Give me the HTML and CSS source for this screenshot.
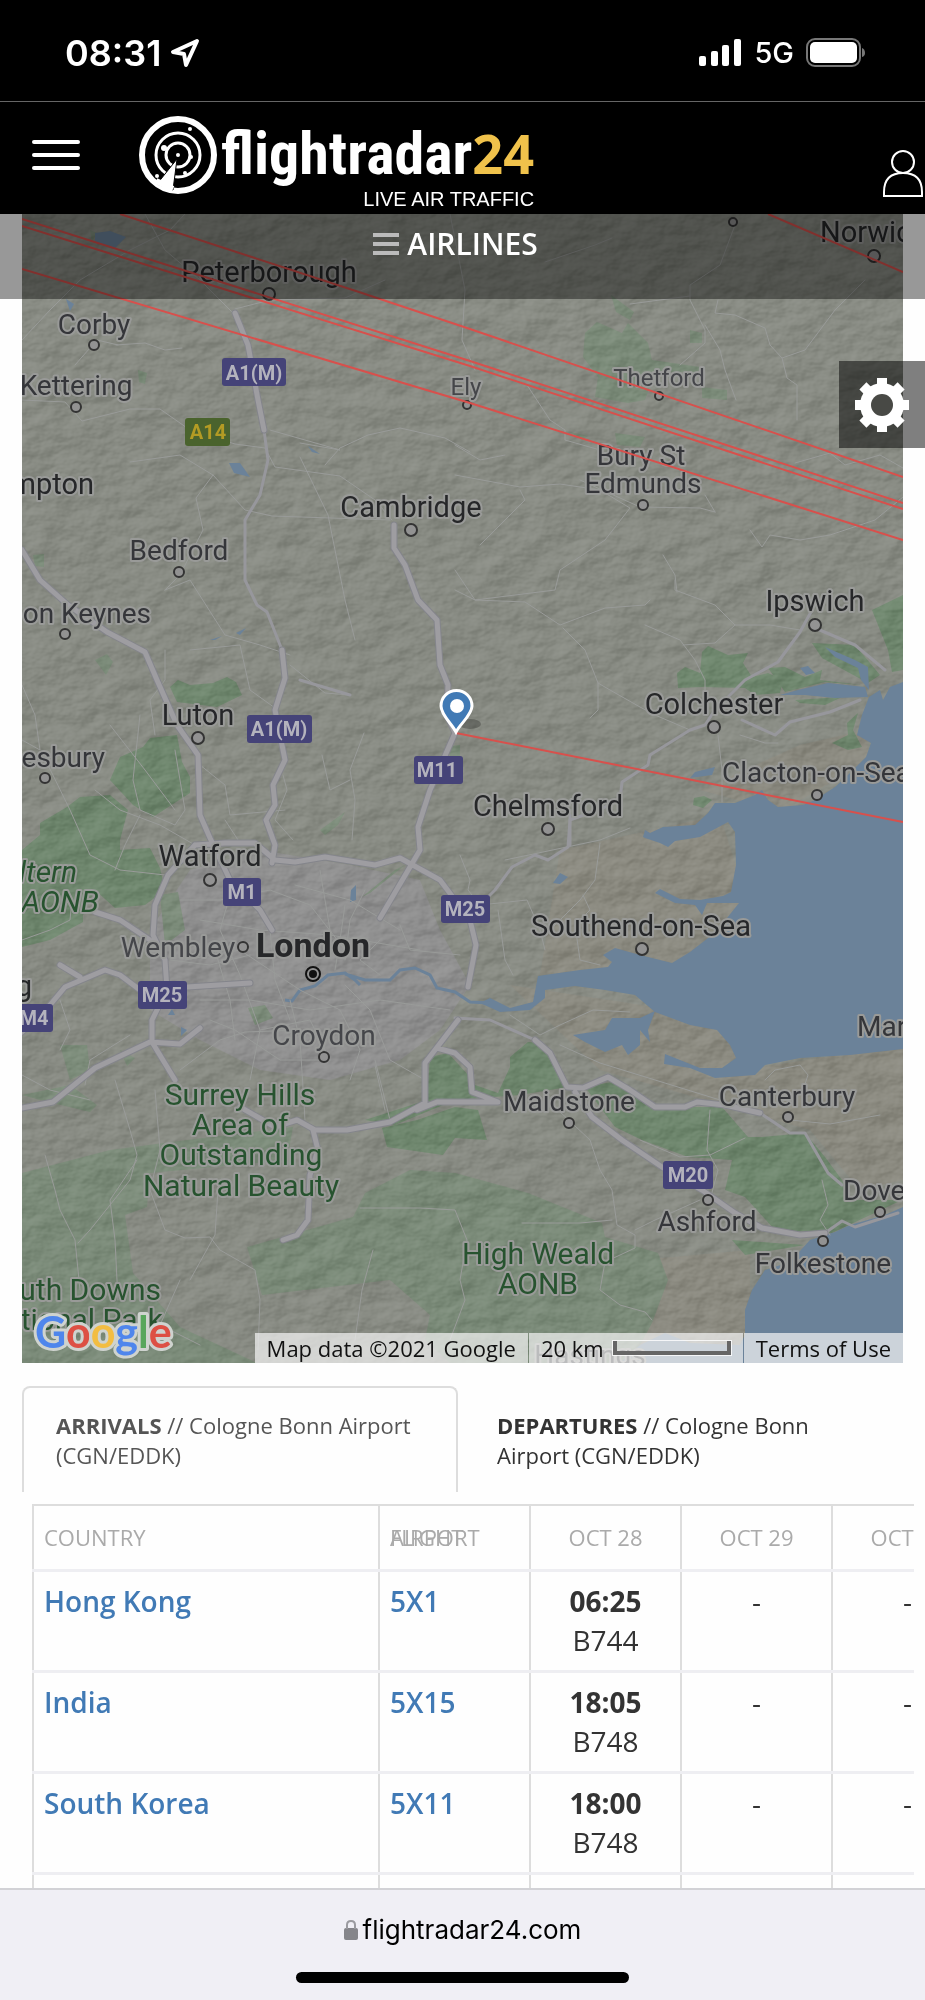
FILE: index.html
```html
<!DOCTYPE html>
<html lang="en">

<head>
    <meta charset="UTF-8">
    <meta name="viewport" content="width=device-width, initial-scale=1.0">
    <title>Flightradar24 - Routes</title>
    <link rel="stylesheet" href="styles.css">
</head>

<body>
    <div class="status-bar">
        <div class="status-time">
            <span>08:31</span>
            <svg width="30" height="30" viewBox="0 0 30 30">
                <path d="M27 3 L3 14 L14 16 L16 27 Z" fill="none" stroke="#fff" stroke-width="4" stroke-linejoin="round" />
            </svg>
        </div>
        <div class="status-icons">
            <svg width="43" height="28" viewBox="0 0 43 28" fill="#fff">
                <rect x="0" y="17" width="7" height="10" rx="2" />
                <rect x="12" y="12" width="7" height="15" rx="2" />
                <rect x="23" y="6" width="7" height="21" rx="2" />
                <rect x="35" y="0" width="7" height="27" rx="2" />
            </svg>
            <span class="network">5G</span>
            <svg width="60" height="30" viewBox="0 0 60 30">
                <rect x="1" y="1" width="53" height="27" rx="8" fill="none" stroke="#777" stroke-width="2" />
                <rect x="4" y="4" width="47" height="21" rx="5" fill="#fff" />
                <path d="M56 10 Q59 11 59 15 Q59 18 56 19 Z" fill="#777" />
            </svg>
        </div>
    </div>

    <header class="header">
        <button class="menu-button" aria-label="Menu"><span></span><span></span><span></span></button>
        <a class="logo" href="#">
            <svg width="78" height="78" viewBox="0 0 78 78" fill="none" stroke="#fff">
                <circle cx="39" cy="39" r="36" stroke-width="6" />
                <circle cx="39" cy="39" r="22" stroke-width="3" />
                <circle cx="39" cy="39" r="12" stroke-width="3" />
                <path d="M38 43 L18 68 L34 74 Z" fill="#fff" stroke="#000" stroke-width="1" />
                <path d="M17 65 L34 73" stroke-width="6" />
                <g fill="#fff" stroke="none">
                    <circle cx="39" cy="39" r="2" />
                    <circle cx="51" cy="13" r="2" />
                    <circle cx="25" cy="32" r="3" />
                    <circle cx="52" cy="41" r="2" />
                    <circle cx="46" cy="57" r="2" />
                    <circle cx="18" cy="60" r="2" />
                </g>
            </svg>
            <span class="logo-words">
                <span class="logo-name">flightradar<b>24</b></span>
                <span class="logo-tag">LIVE AIR TRAFFIC</span>
            </span>
        </a>
        <button class="user-button" aria-label="Account">
            <svg width="42" height="50" viewBox="0 0 42 50" fill="none" stroke="#fff" stroke-width="2">
                <circle cx="20" cy="13" r="11" />
                <path d="M1 47 V43 Q1 24 20 24 Q39 24 39 43 V47 Z" />
            </svg>
        </button>
    </header>

    <main class="content">
        <div class="airlines">
            <button class="airlines-button"><i></i>AIRLINES</button>
        </div>
        <button class="settings" aria-label="Settings">
            <svg width="54" height="54" viewBox="-27 -27 54 54">
                <g fill="#fff">
                    <path id="tooth" d="M-5 -27 H5 V27 H-5 Z" />
                    <use href="#tooth" transform="rotate(45)" />
                    <use href="#tooth" transform="rotate(90)" />
                    <use href="#tooth" transform="rotate(135)" />
                    <circle r="22" />
                </g>
                <circle r="11" fill="#484945" />
            </svg>
        </button>

        <div class="map">
            <svg class="map-canvas" viewBox="22 214 881 1149">
                <defs>
                    <filter id="relief" x="0" y="0" width="100%" height="100%" color-interpolation-filters="sRGB">
                        <feTurbulence type="fractalNoise" baseFrequency="0.03 0.045" numOctaves="4" seed="8" />
                        <feDiffuseLighting surfaceScale="5" lighting-color="#fff">
                            <feDistantLight azimuth="225" elevation="30" />
                        </feDiffuseLighting>
                    </filter>
                    <path id="motorways" d="M195 845 L168 875 L155 905 L153 935 L165 960 L167 990 L152 1020 V1042 L175 1080 M240 1107 L275 1127 L297 1120 L315 1130 L347 1130 L390 1122 L425 1103 V1063 L458 1020 M468 987 L476 945 L470 920 L440 880 L400 858 L375 865 L325 857 L295 862 L275 860 L255 843 L225 843 L195 845 M40 580 L68 605 L107 632 L145 652 L157 680 L177 725 L198 755 L200 815 L210 838 L230 880 L260 910 L272 930 M22 550 L40 580 M235 313 L248 345 L258 400 L264 430 M282 650 L285 678 L275 710 L285 760 L273 785 L275 805 L266 820 L275 845 L272 863 M394 525 V548 L405 565 L418 600 L437 620 L440 665 L448 685 L447 715 L455 733 L430 790 L418 827 L420 850 L380 918 M22 1108 L53 1102 L95 1068 L150 1042 L180 1044 L200 1028 M22 1032 L50 1005 L65 987 L105 970 L120 975 L140 990 L250 983 M60 965 L80 977 M95 912 L120 920 L150 940 M417 1110 L437 1102 L498 1102 L472 1092 L470 1067 L455 1053 L437 1048 M535 1040 L550 1053 L567 1087 L583 1088 L608 1077 L630 1090 L655 1107 L685 1107 L697 1102 L725 1105 L760 1113 M575 1092 L592 1117 L622 1140 L662 1167 L702 1190 L735 1213 L762 1228 L800 1235 L825 1233 M313 1130 L318 1150 L310 1175 L308 1220 L297 1235 L283 1240" />
                </defs>
                <rect x="22" y="214" width="881" height="1149" fill="#888b83" />
                <path class="built" d="M190 870 L260 850 L350 865 L420 880 L440 930 L470 985 L440 1030 L400 1060 L330 1080 L260 1070 L200 1040 L150 1010 L150 930 Z" />
                <path class="sand" d="M560 850 L720 815 L745 895 L700 960 L540 975 Z M700 790 L800 745 L865 730 L870 760 L780 812 Z M510 985 L740 1020 L740 1070 L903 1045 L903 1180 L860 1190 L810 1130 L600 1070 Z M640 1260 L750 1250 L750 1363 L620 1363 Z" />

                <!-- woods and downs -->
                <g class="wood">
                    <path d="M585 333 L597 322 L622 333 L628 323 L648 343 L652 360 L700 367 L698 372 L655 372 L645 400 L628 403 L595 397 L598 377 L583 357 Z" />
                    <path d="M702 387 L727 390 V400 L702 398 Z M615 433 L645 437 L640 447 L617 445 Z M570 432 L588 436 L582 440 Z M690 330 L702 333 V343 H690 Z M611 295 L634 312 L630 320 L616 312 Z" />
                    <path d="M22 1173 L110 1150 L187 1140 L293 1127 L287 1160 L150 1173 L147 1207 L125 1215 L133 1273 L180 1327 L257 1363 H22 Z" />
                    <path d="M247 1247 L353 1217 L365 1193 L410 1170 L455 1173 L528 1193 L602 1223 L605 1237 L658 1253 L668 1280 L652 1323 L630 1363 H450 L425 1340 L430 1315 L390 1280 L262 1295 Z" />
                    <path d="M60 1045 L87 1045 L90 1070 L70 1080 Z M120 1050 L135 1058 L127 1066 Z M248 1008 L265 1005 L273 1018 L255 1025 Z M160 895 L178 892 L185 930 L165 945 Z M395 870 L405 865 L370 893 L362 897 Z M22 1095 L70 1085 L97 1105 L90 1112 L40 1100 Z M320 830 L345 812 L338 825 L325 835 Z M95 660 L107 654 L113 662 L106 675 Z M138 370 L147 373 L145 384 L139 382 Z M33 555 L44 554 V567 L35 566 Z M450 746 L460 745 V756 H450 Z M90 230 L97 233 L92 242 Z" />
                </g>
                <g class="aonb">
                    <path d="M143 747 L150 738 L177 735 L182 762 L190 777 V793 L153 817 L133 805 L110 780 L120 757 Z" />
                    <path d="M80 797 L110 795 L128 810 L120 840 V850 L150 848 L160 868 L165 890 L145 905 L115 908 L95 890 L83 915 V922 L50 940 L22 947 V850 L40 835 V823 L67 807 Z" />
                    <path d="M170 687 L178 680 L190 685 L213 683 L227 677 L236 682 L242 695 L217 707 L177 702 Z" />
                    <path d="M677 673 L685 667 L700 673 L702 652 L708 646 L728 655 L748 653 L743 663 L752 677 L768 673 L783 680 L780 693 L755 695 L745 688 L702 687 L678 688 Z" />
                    <path d="M872 610 L903 595 V670 L892 672 L888 650 Z M812 643 L855 645 L880 675 L868 683 L822 658 Z M768 668 L785 667 L805 677 L822 670 L820 680 L862 685 L825 682 L785 692 Z M795 700 L842 697 L825 705 L800 703 Z M847 723 L858 713 L853 730 L862 747 L848 750 L832 743 L848 735 Z M694 798 L704 796 L712 800 L703 808 L693 805 Z" />
                    <path d="M430 1057 L448 1053 L470 1077 L475 1085 L498 1093 L510 1067 V1057 L528 1042 L542 1043 L555 1070 L568 1087 L520 1095 L455 1100 L395 1125 L365 1120 L427 1100 Z" />
                    <path d="M382 1128 L417 1120 L455 1107 L478 1110 L487 1140 L455 1138 L443 1155 L387 1147 Z" />
                    <path d="M585 1087 L612 1082 L655 1107 L722 1107 L748 1137 L762 1137 L805 1133 L825 1157 L842 1180 L852 1200 L902 1200 L832 1233 L775 1230 L745 1197 L725 1190 L732 1160 L688 1157 L642 1140 L615 1127 Z" />
                    <path d="M732 1240 L775 1243 L805 1245 L745 1255 Z" />
                </g>
                <rect class="relief" x="22" y="214" width="881" height="1149" filter="url(#relief)" />

                <!-- sea, estuaries and lakes -->
                <g class="water">
                    <path d="M903 682 L890 687 L883 700 L880 690 L869 697 L862 715 L857 735 L871 743 L866 757 L845 778 L835 787 L815 800 L803 805 L778 807 L768 800 L762 790 L755 795 L735 803 L715 803 L708 813 L695 825 L663 827 L650 833 L645 830 L643 837 L632 831 L645 838 L660 843 L668 847 L675 841 L700 837 L728 822 L735 832 L736 865 L731 892 L723 896 L700 900 L680 899 L660 889 L655 893 L675 903 L695 905 L702 915 L707 903 L739 903 L727 918 L712 935 L690 952 L672 963 L640 955 L615 948 L603 955 L612 962 L608 967 L580 970 L538 976 L533 1002 L510 1008 L490 998 L480 1003 L500 1012 L530 1010 L545 998 V990 L575 986 L605 990 L635 995 L655 1012 L690 1025 L717 1030 L730 1045 L736 1058 L722 1068 L700 1068 L665 1054 L664 1064 L690 1068 L715 1078 L755 1075 L765 1065 L800 1058 L850 1055 L903 1049 Z" />
                    <path d="M573 1035 L605 1030 L612 1018 L640 1018 L655 1011 L648 1030 L650 1042 L640 1030 L640 1045 L628 1055 L622 1045 L605 1052 L585 1042 Z" />
                    <path d="M903 1207 L885 1215 L850 1225 L835 1232 L810 1240 L790 1262 L765 1270 L752 1290 L745 1310 V1335 L740 1345 L690 1343 L665 1333 L640 1345 L620 1363 H903 Z" />
                    <path d="M780 695 L798 690 L828 683 L865 687 L868 697 L835 698 L805 695 Z M825 647 L855 660 L868 667 L869 690 L861 680 L858 668 L835 657 Z M800 668 L808 666 L815 673 L806 675 Z M695 772 L715 767 L712 775 L690 778 Z" />
                    <path d="M229 463 L240 463 L250 477 L234 473 Z M95 233 L110 231 L126 237 L114 249 L95 242 Z M66 299 L74 304 L70 311 Z M308 446 L320 454 L312 452 Z M553 883 L560 873 L568 877 L560 884 Z M168 1015 L172 1009 L175 1015 Z M181 1027 L187 1030 L181 1036 Z M351 890 L356 885 V900 L350 902 Z M210 640 L222 636 L215 640 Z M236 633 L246 628 L240 635 Z" />
                    <path class="river" d="M345 974 L365 980 L390 980 L400 970 L415 968 L430 975 L437 988 L455 992 L470 1002 L490 1003 M285 1000 L292 1001 L300 990 L315 986 L328 975 L345 973 L355 980 L360 985" />
                </g>

                <!-- minor roads -->
                <g class="roads">
                    <path d="M22 400 L65 402 L82 421 L130 409 L160 409 L190 430 L235 444 L265 448 L275 467 L340 476 L375 500 L392 520" />
                    <path d="M22 340 L50 310 L80 280 L130 250 L170 230 L185 214 M145 214 L165 250 L200 280 L225 305 L240 320 M235 309 L270 300 L345 298 L385 280" />
                    <path d="M130 462 L180 455 L213 475 L245 510 L272 516 L390 520 M213 475 L196 498 L203 530 L180 575 L165 590 M75 365 L97 340 L118 345 M116 345 L145 343 L165 350 L182 348" />
                    <path d="M300 457 L328 515 L345 600 L355 640 M270 430 L340 450 L300 443 M340 448 L368 435 L400 428 L445 438 L470 452 M325 465 L340 448" />
                    <path d="M450 214 L465 290 L462 340 L475 370 M527 385 L550 420 L565 430 V440 L600 450 M455 445 L480 460 L505 455 M520 490 L525 500 L480 545" />
                    <path d="M545 262 L595 245 L612 238 M455 475 L520 487 L560 484 L600 490 L630 508 L605 540 L560 570 L555 590 L475 600 L455 570" />
                    <path d="M735 225 L720 265 L690 285 V300 L705 330 V343 L680 365 M690 296 L630 304 M718 300 L715 313 L735 315 L765 328 L770 345 L782 358 L805 350 L835 310 L865 280 M782 358 L787 378 L797 385 V420 M705 325 L720 350 L725 370 L736 400" />
                    <path d="M580 480 L640 507 L700 508 L715 512 M705 495 L715 512 M750 530 L762 547 L770 535 L800 540 L830 535 L875 520 L903 497 M795 463 L830 453 L845 465 L880 455 L903 468" />
                    <path d="M455 590 L475 600 L525 602 L560 625 L605 608 L645 605 L650 600 M563 628 L585 650 L598 683 L610 690 L640 707 L655 715 L690 730 M675 580 V590 L715 605 L735 625 L770 625 L800 630 M645 625 L680 640 L695 660 L705 680 V700 M735 625 L715 643 L683 645" />
                    <path d="M663 555 L675 575 L677 592 M598 683 V710 L590 718 M740 735 L765 743 L778 743 M718 735 L722 770 V802" />
                    <path d="M22 685 L35 715 L40 750 L22 740 M48 765 L70 810 L90 855 L120 870 L165 875 M110 725 L145 770 L175 810 M140 715 L133 780 L140 810 L175 825 L185 810 L175 750" />
                    <path d="M165 650 L165 680 L150 700 L155 735 M190 650 L240 645 L250 690 L275 708 M165 590 L190 580 L225 635 L260 645 L290 655 M290 665 L325 693 L350 695 M364 733 L350 770 L355 800 L352 840 M322 755 L330 790 L350 780 M200 765 L225 785 L230 815 L285 810 M225 820 L240 843" />
                    <path d="M283 775 L287 790 L275 820 L293 840 M115 870 L125 845 L140 815 M95 790 L120 810 L160 825 L195 845" />
                    <path d="M22 940 L50 930 L70 920 L72 900 M60 1000 L70 1030 L60 1050 M85 1085 L90 1060 L130 1035 M22 1075 L50 1090 L90 1100 M115 1080 L130 1130 L137 1155 L130 1180 L90 1230 L78 1243 M137 1160 L110 1200 L115 1240 L118 1300 M45 1155 L55 1190 L60 1210 L75 1240 L80 1290 M155 1090 L160 1150 L150 1190 L165 1230 L185 1238 L210 1237 L220 1250" />
                    <path d="M218 1190 L215 1235 L190 1280 M220 1250 L255 1270 L260 1300 L258 1350 M180 1280 L160 1325 L200 1345 M373 1250 L362 1290 L355 1340 M360 1208 L420 1208 L455 1210 L467 1240 L460 1280 L465 1300 L450 1340 M375 1065 L385 1110 M375 1060 L390 1120" />
                    <path d="M505 860 L600 840 L630 828 M600 843 L595 880 L580 900 L560 920 L545 935 M460 855 L470 880 L468 890 L480 905 L527 900 L540 930 L545 950 M583 895 L590 910 L575 925 L580 960 L600 965 M498 910 L505 960 L513 975" />
                    <path d="M510 1015 L540 1035 L560 1025 L593 1010 L630 1012 M560 1045 L600 1063 L720 1100 M558 1110 L590 1140 L600 1170 L612 1190 L617 1225 L635 1235 V1248 L605 1262 L600 1290 L620 1305 L645 1312 L652 1320 M522 1223 L580 1223 L612 1220 M635 1230 L655 1220 L700 1200" />
                    <path d="M710 1110 L707 1150 L718 1170 L710 1200 M640 1140 L680 1157 L710 1155 L745 1138 M822 1180 L828 1205 L820 1220 L830 1235 M790 1120 L830 1124 L880 1115 M765 1080 L775 1070 L800 1065 L808 1075 L803 1090" />
                    <path d="M345 905 L340 940 L335 970 M365 890 L350 920 L345 960 M320 870 L330 930 M295 885 L350 900 L400 930 M200 920 L260 930 L330 935 L420 950 M230 895 L220 930 L240 975 L260 1030 L250 1080" />
                    <path d="M180 900 L220 900 L270 890 L310 905 L345 950 M185 960 L240 950 L300 990 L340 1010 L360 1050 L350 1080 M200 1000 L250 1000 L310 1010 L380 1000 L450 1010 M290 1000 L300 1040 L305 1120 M260 1030 L310 1020 L330 1060 M345 985 L370 1010 L390 1060 L425 1080 M210 1020 L235 1030 L280 1060 L325 1060 M380 940 L360 960 L380 975 M400 925 L410 950 L460 955 M170 960 L210 965 L250 955 M180 1070 L220 1040 L245 1032 L300 1030 M215 950 L230 1000 L235 1040 M270 930 L275 980 L290 1020" />
                </g>

                <!-- trunk roads -->
                <g class="trunk">
                    <path d="M475 910 L495 890 L512 867 L535 855 L548 860 L568 847 L570 820 L605 807 L620 800 L622 782 L648 765 L650 755 L690 730 L705 725 L715 710 L745 680 L778 662 L800 632 L812 610" />
                    <path d="M742 720 L775 735 L790 722 L830 712 L860 700 M815 628 L855 645 L885 670" />
                    <path d="M455 1018 L490 1020 L535 1040 M300 680 L350 695 M570 845 V815" />
                    <path d="M264 430 L268 460 L260 495 L245 520 V580 L257 605 L267 612 L282 650 M760 1113 L790 1133 L805 1133 L828 1173 L842 1185 M825 1233 L842 1221 L855 1227 L898 1213" />
                </g>
                <use href="#motorways" class="casing" />
                <use href="#motorways" class="motorway" />

                <!-- road shields -->
                <g class="shields">
                    <rect x="222" y="358" width="64" height="28" rx="3" /><text x="254" y="380">A1(M)</text>
                    <rect class="green" x="185" y="418" width="45" height="28" rx="3" /><text class="yellow" x="208" y="439">A14</text>
                    <rect x="247" y="715" width="65" height="28" rx="3" /><text x="279" y="736">A1(M)</text>
                    <rect x="414" y="756" width="49" height="28" rx="3" /><text x="437" y="777">M11</text>
                    <rect x="223" y="878" width="38" height="28" rx="3" /><text x="242" y="899">M1</text>
                    <rect x="441" y="895" width="49" height="28" rx="3" /><text x="465" y="916">M25</text>
                    <rect x="138" y="981" width="49" height="28" rx="3" /><text x="162" y="1002">M25</text>
                    <rect x="12" y="1004" width="41" height="28" rx="3" /><text x="34" y="1025">M4</text>
                    <rect x="663" y="1161" width="50" height="28" rx="3" /><text x="688" y="1182">M20</text>
                </g>

                <!-- towns -->
                <g class="dots">
                    <circle cx="269" cy="294" r="6" /><circle cx="94" cy="345" r="5" /><circle cx="76" cy="407" r="5" />
                    <circle cx="179" cy="572" r="5" /><circle cx="411" cy="530" r="6" /><circle cx="467" cy="405" r="4" />
                    <circle cx="659" cy="396" r="4" /><circle cx="643" cy="505" r="5" /><circle cx="733" cy="222" r="4" />
                    <circle cx="874" cy="256" r="6" /><circle cx="815" cy="625" r="6" /><circle cx="714" cy="727" r="6" />
                    <circle cx="817" cy="795" r="5" /><circle cx="548" cy="829" r="6" /><circle cx="642" cy="949" r="6" />
                    <circle cx="65" cy="634" r="5" /><circle cx="198" cy="738" r="6" /><circle cx="45" cy="778" r="5" />
                    <circle cx="210" cy="880" r="6" /><circle cx="243" cy="947" r="5" /><circle cx="324" cy="1057" r="5" />
                    <circle cx="569" cy="1123" r="5" /><circle cx="788" cy="1117" r="5" /><circle cx="708" cy="1200" r="5" />
                    <circle cx="880" cy="1212" r="5" /><circle cx="823" cy="1241" r="5" />
                    <circle cx="313" cy="974" r="7" stroke="#111" /><circle cx="313" cy="974" r="3" fill="#111" stroke="#111" />
                </g>
                <g class="labels">
                    <text x="269" y="282">Peterborough</text>
                    <text x="411" y="517">Cambridge</text>
                    <text x="820" y="242" text-anchor="start">Norwich</text>
                    <text x="94" y="494" text-anchor="end">mpton</text>
                    <text x="815" y="611">Ipswich</text>
                    <text x="714" y="714">Colchester</text>
                    <text x="548" y="816">Chelmsford</text>
                    <text x="641" y="936">Southend-on-Sea</text>
                    <text x="198" y="725">Luton</text>
                    <text x="210" y="866">Watford</text>
                    <text x="32" y="996" text-anchor="end">Reading</text>
                    <text x="313" y="957" class="city">London</text>
                </g>
                <g class="labels town">
                    <text x="94" y="334">Corby</text>
                    <text x="76" y="395">Kettering</text>
                    <text x="179" y="560">Bedford</text>
                    <text x="641" y="465">Bury St</text>
                    <text x="643" y="493">Edmunds</text>
                    <text x="151" y="623" text-anchor="end">on Keynes</text>
                    <text x="105" y="767" text-anchor="end">esbury</text>
                    <text x="722" y="782" text-anchor="start">Clacton-on-Sea</text>
                    <text x="857" y="1036" text-anchor="start">Margate</text>
                    <text x="178" y="957" class="suburb">Wembley</text>
                    <text x="324" y="1045" class="suburb">Croydon</text>
                    <text x="569" y="1111">Maidstone</text>
                    <text x="787" y="1106">Canterbury</text>
                    <text x="707" y="1231">Ashford</text>
                    <text x="843" y="1200" text-anchor="start">Dover</text>
                    <text x="823" y="1273">Folkestone</text>
                    <text x="590" y="1365">Hastings</text>
                </g>
                <g class="labels village">
                    <text x="466" y="395">Ely</text>
                    <text x="659" y="386">Thetford</text>
                </g>
                <g class="labels park">
                    <text x="240" y="1105">Surrey Hills</text>
                    <text x="240" y="1135">Area of</text>
                    <text x="241" y="1165">Outstanding</text>
                    <text x="241" y="1196">Natural Beauty</text>
                    <text x="538" y="1264">High Weald</text>
                    <text x="538" y="1294">AONB</text>
                    <text x="161" y="1300" text-anchor="end">uth Downs</text>
                    <text x="163" y="1330" text-anchor="end">tional Park</text>
                    <text x="77" y="882" text-anchor="end" font-style="italic">ltern</text>
                    <text x="99" y="912" text-anchor="end" font-style="italic">AONB</text>
                </g>

                <!-- flight routes -->
                <g class="routes">
                    <path d="M22 219 L470 361 L903 503" />
                    <path d="M22 226 L470 366 L903 509" />
                    <path d="M22 269 L470 403 L903 540" />
                    <path d="M120 214 L362 293 L470 329 L903 477" />
                    <path d="M768 214 L903 272" />
                    <path d="M456 733 L903 822" />
                </g>
                <ellipse cx="470" cy="724" rx="11" ry="5" fill="#000" opacity="0.25" />
                <path d="M456 732 C452 724 441 715 441 706 A15 15 0 0 1 472 706 C472 715 460 724 456 732 Z" fill="#417ab5" stroke="#fff" stroke-width="3" />
                <circle cx="457" cy="706" r="7" fill="#fff" />
                <text class="google" x="35" y="1348"><tspan fill="#4f86ec">G</tspan><tspan fill="#dd5044">o</tspan><tspan fill="#f2bd42">o</tspan><tspan fill="#4f86ec">g</tspan><tspan fill="#58a65c">l</tspan><tspan fill="#dd5044">e</tspan></text>
            </svg>
            <div class="map-credits">
                <span>Map data ©2021 Google</span>
                <span class="scale">20 km<i></i></span>
                <a href="#">Terms of Use</a>
            </div>
        </div>

        <nav class="tabs">
            <a class="tab active" href="#"><b>ARRIVALS</b> // Cologne Bonn Airport (CGN/EDDK)</a>
            <a class="tab" href="#"><b>DEPARTURES</b> // Cologne Bonn Airport (CGN/EDDK)</a>
        </nav>

        <div class="table-wrap">
            <table class="routes-table">
                <colgroup>
                    <col class="col-country">
                    <col class="col-day">
                    <col class="col-day">
                    <col class="col-day">
                    <col class="col-day">
                </colgroup>
                <thead>
                    <tr>
                        <th>COUNTRY</th>
                        <th class="stacked"><span>FLIGHT</span>AIRPORT</th>
                        <th class="day">OCT 28</th>
                        <th class="day">OCT 29</th>
                        <th class="day">OCT 30</th>
                    </tr>
                </thead>
                <tbody>
                    <tr>
                        <td><a href="#">Hong Kong</a></td>
                        <td><a href="#">5X1</a></td>
                        <td class="day"><b>06:25</b><br>B744</td>
                        <td class="day">-</td>
                        <td class="day">-</td>
                    </tr>
                    <tr>
                        <td><a href="#">India</a></td>
                        <td><a href="#">5X15</a></td>
                        <td class="day"><b>18:05</b><br>B748</td>
                        <td class="day">-</td>
                        <td class="day">-</td>
                    </tr>
                    <tr>
                        <td><a href="#">South Korea</a></td>
                        <td><a href="#">5X11</a></td>
                        <td class="day"><b>18:00</b><br>B748</td>
                        <td class="day">-</td>
                        <td class="day">-</td>
                    </tr>
                    <tr>
                        <td></td>
                        <td></td>
                        <td></td>
                        <td></td>
                        <td></td>
                    </tr>
                </tbody>
            </table>
        </div>
    </main>

    <footer class="browser-bar">
        <div class="address">
            <svg width="14" height="22" viewBox="0 0 14 22">
                <rect x="0" y="9" width="14" height="12" rx="2" fill="#85858a" />
                <path d="M3 10 V6 Q3 2 7 2 Q11 2 11 6 V10" fill="none" stroke="#9b9ba0" stroke-width="2" />
            </svg>
            <span>flightradar24.com</span>
        </div>
        <div class="home-indicator"></div>
    </footer>
</body>

</html>
```
FILE: styles.css
```css
* {
    box-sizing: border-box;
}

body {
    margin: 0;
    height: 100vh;
    display: flex;
    flex-direction: column;
    background-color: #fefefe;
    color: #333;
    font-family: "Open Sans", sans-serif;
    overflow: hidden;
}

button {
    border: 0;
    padding: 0;
    background: none;
    color: inherit;
    font: inherit;
}

a {
    text-decoration: none;
}

svg {
    display: block;
}

/* phone status bar */
.status-bar {
    height: 101px;
    flex: none;
    padding: 4px 59px 0 65px;
    display: flex;
    justify-content: space-between;
    align-items: center;
    background-color: #000;
    color: #fff;
    font-family: Inter, sans-serif;
}

.status-time,
.status-icons {
    display: flex;
    align-items: center;
    gap: 9px;
    font-size: 36px;
    font-weight: 600;
}

.status-icons {
    gap: 12px;
}

.network {
    font-size: 29px;
    font-weight: 500;
}

/* site header */
.header {
    height: 113px;
    flex: none;
    padding-bottom: 7px;
    display: flex;
    align-items: center;
    border-top: 1px solid #666;
    background-color: #000;
}

.menu-button {
    width: 48px;
    margin-left: 32px;
    display: flex;
    flex-direction: column;
    gap: 9px;
}

.menu-button span {
    height: 4px;
    border-radius: 2px;
    background-color: #fff;
}

.logo {
    display: flex;
    align-items: center;
    margin-left: 59px;
    color: #fff;
}

.logo-words {
    display: flex;
    flex-direction: column;
    align-items: flex-end;
    padding: 20px 0 0 4px;
}

.logo-name {
    font-family: "Liberation Sans Narrow", "Roboto Condensed", "DejaVu Sans Condensed", sans-serif;
    font-size: 60px;
    font-weight: 700;
    line-height: 68px;
}

.logo-name b {
    color: #f0c24b;
    font-family: "Open Sans", sans-serif;
    font-size: 54px;
    font-weight: 700;
}

.logo-tag {
    font-family: "Liberation Sans", sans-serif;
    font-size: 20px;
    line-height: 22px;
}

.user-button {
    margin-left: auto;
    padding-top: 38px;
}

/* map */
.content {
    position: relative;
    flex: 1;
    min-height: 0;
    overflow: hidden;
}

.airlines {
    position: absolute;
    z-index: 2;
    top: 0;
    left: 0;
    right: 0;
    height: 85px;
    padding-top: 10px;
    background-color: rgba(0, 0, 0, 0.4);
    text-align: center;
}

.airlines-button {
    display: inline-flex;
    align-items: center;
    gap: 8px;
    margin-right: 14px;
    color: #fff;
    font-size: 30px;
    font-weight: 600;
    line-height: 40px;
}

.airlines-button i {
    width: 26px;
    height: 22px;
    border-top: 4px solid #bbb;
    border-bottom: 4px solid #bbb;
    background: linear-gradient(#bbb, #bbb) center / 26px 4px no-repeat;
}

.settings {
    position: absolute;
    z-index: 2;
    top: 147px;
    right: 0;
    width: 86px;
    height: 87px;
    padding-left: 16px;
    background-color: rgba(0, 0, 0, 0.5);
}

.map {
    position: relative;
    margin: 0 22px;
}

.map-canvas {
    width: 100%;
    font-family: Roboto, sans-serif;
}

.built {
    fill: #8f8f8f;
}

.sand {
    fill: #8b8a80;
}

.wood {
    fill: #7b8b79;
}

.aonb {
    fill: #6f876e;
}

.water {
    fill: #6b8299;
}

.river {
    fill: none;
    stroke: #6b8299;
    stroke-width: 3;
}

.relief {
    mix-blend-mode: soft-light;
    opacity: 0.25;
}

.roads,
.trunk,
.casing,
.motorway {
    fill: none;
    stroke-linejoin: round;
    stroke-linecap: round;
}

.roads {
    stroke: #999b99;
    stroke-width: 1;
}

.trunk {
    stroke: #97979c;
    stroke-width: 3;
}

.casing {
    stroke: #84858b;
    stroke-width: 7;
}

.motorway {
    stroke: #9e9da1;
    stroke-width: 5;
}

.shields {
    fill: #454378;
    text-anchor: middle;
    font-size: 20px;
    font-weight: 700;
}

.shields text {
    fill: #b4b3bd;
}

.shields .green {
    fill: #4a632d;
}

.shields .yellow {
    fill: #b39b24;
}

.dots {
    fill: #929292;
    stroke: #333;
    stroke-width: 2;
}

.labels {
    fill: #262729;
    stroke: #999a98;
    stroke-width: 4;
    stroke-linejoin: round;
    paint-order: stroke;
    text-anchor: middle;
    font-size: 29px;
}

.town {
    fill: #35363a;
    font-size: 28px;
}

.suburb {
    fill: #45464a;
}

.village {
    fill: #45464a;
    font-size: 24px;
}

.city {
    font-size: 34px;
    font-weight: 700;
}

.park {
    fill: #27532f;
    font-size: 30px;
}

.routes {
    fill: none;
    stroke: #d8504c;
    stroke-width: 2;
}

.google {
    font-family: Lato, sans-serif;
    font-size: 43px;
    font-weight: 700;
    stroke: #cfd3cf;
    stroke-width: 6;
    stroke-linejoin: round;
    paint-order: stroke;
}

.map-credits {
    position: absolute;
    right: 0;
    bottom: 0;
    display: flex;
    color: #111;
    font-size: 22px;
    line-height: 30px;
}

.map-credits > * {
    padding: 0 12px;
    margin-left: 1px;
    background-color: rgba(245, 245, 245, 0.7);
    color: #111;
}

.scale {
    display: flex;
    align-items: center;
    gap: 9px;
}

.scale i {
    width: 118px;
    height: 14px;
    border: 4px solid #666;
    border-top: 0;
    outline: 1px solid rgba(255, 255, 255, 0.8);
}

/* tabs */
.tabs {
    display: flex;
    margin: 23px 22px 12px;
}

.tab {
    width: 436px;
    height: 106px;
    padding: 24px 37px 0 39px;
    color: #333;
    font-size: 22px;
    line-height: 30px;
}

.tab.active {
    padding-top: 22px;
    padding-left: 32px;
    border: 2px solid #ddd;
    border-bottom: 0;
    border-radius: 8px 8px 0 0;
    color: #555;
}

/* timetable */
.table-wrap {
    margin: 0 11px 0 32px;
    overflow: hidden;
}

.routes-table {
    width: 950px;
    table-layout: fixed;
    border-collapse: collapse;
    border: 2px solid #ddd;
}

.col-country {
    width: 346px;
}

.col-day {
    width: 151px;
}

.routes-table th,
.routes-table td {
    border-right: 2px solid #ddd;
    border-bottom: 3px solid #eeeef2;
    padding: 10px;
    text-align: left;
    vertical-align: top;
    font-size: 28px;
    line-height: 39px;
}

.routes-table td {
    height: 101px;
    padding-bottom: 9px;
}

.routes-table th {
    padding: 12px 10px;
    color: #aaa;
    font-size: 22px;
    font-weight: 400;
}

.routes-table .day {
    text-align: center;
}

.routes-table a {
    color: #417ab5;
    font-weight: 600;
}

.stacked {
    position: relative;
}

.stacked span {
    position: absolute;
}

/* browser bar */
.browser-bar {
    height: 112px;
    flex: none;
    padding: 22px 0 17px;
    display: flex;
    flex-direction: column;
    align-items: center;
    justify-content: space-between;
    border-top: 2px solid #d2d2d6;
    background-color: #f0eff5;
}

.address {
    display: flex;
    align-items: center;
    gap: 5px;
    color: #000;
    font-family: Inter, sans-serif;
    font-size: 26px;
    line-height: 36px;
}

.home-indicator {
    width: 36%;
    height: 11px;
    border-radius: 6px;
    background-color: #000;
}
```
